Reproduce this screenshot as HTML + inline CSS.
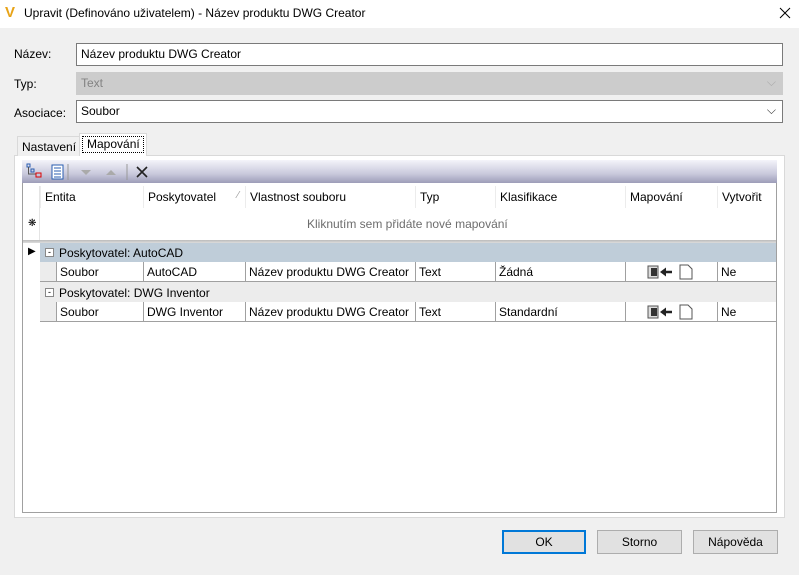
<!DOCTYPE html><html><head><meta charset="utf-8"><style>
*{box-sizing:border-box;margin:0;padding:0}
body{width:799px;height:575px;background:#f0f0f0;font-family:"Liberation Sans","DejaVu Sans",sans-serif;font-size:12px;color:#000;position:relative;overflow:hidden}
.a{position:absolute}
.t{white-space:nowrap}
.inp{position:absolute;left:76px;width:707px;height:23px;border:1px solid #7a7a7a;background:#fff;padding:3px 4px}
.hdr{position:absolute;top:186px;height:22px;padding:4px 4px;color:#000;border-left:1px solid #ececec}
.cell{position:absolute;height:20px;padding:3px 3px;border-left:1px solid #a0a0a0;border-bottom:1px solid #a0a0a0;background:#fff;white-space:nowrap}
.btn{position:absolute;top:530px;height:24px;border:1px solid #adadad;background:#e1e1e1;text-align:center;padding-top:4px}
</style></head><body>
<div class="a" style="left:0;top:0;width:799px;height:28px;background:#fff"></div>
<div class="a t" style="left:5px;top:5px;width:14px;height:16px;color:#e8a317;font-weight:bold;font-size:15px;line-height:16px">V</div>
<div class="a t" style="left:24px;top:6px;font-size:12px">Upravit (Definováno uživatelem) - Název produktu DWG Creator</div>
<svg class="a" style="left:779px;top:7px" width="12" height="12"><path d="M1 1l10 10M11 1L1 11" stroke="#000" stroke-width="1"/></svg>

<div class="a t" style="left:14px;top:47px">Název:</div>
<div class="inp" style="top:43px">Název produktu DWG Creator</div>
<div class="a t" style="left:14px;top:77px">Typ:</div>
<div class="inp" style="top:72px;background:#cccccc;border-color:#cccccc;color:#838383">Text<span style="position:absolute;right:6px;top:2px;color:#aaa">⌵</span></div>
<div class="a t" style="left:14px;top:106px">Asociace:</div>
<div class="inp" style="top:100px">Soubor<span style="position:absolute;right:6px;top:2px;color:#333">⌵</span></div>

<div class="a" style="left:14px;top:155px;width:771px;height:363px;border:1px solid #d9d9d9;background:#fff"></div>
<div class="a t" style="left:17px;top:136px;width:63px;height:20px;border:1px solid #d9d9d9;border-bottom:none;background:#f0f0f0;padding:3px 4px">Nastavení</div>
<div class="a t" style="left:79px;top:133px;width:68px;height:23px;border:1px solid #d9d9d9;border-bottom:none;background:#fff;padding:2px 2px"><span style="border:1px dotted #000;padding:0 3px 0 4px;display:inline-block;height:17px;width:62px">Mapování</span></div>

<div class="a" style="left:22px;top:160px;width:755px;height:23px;background:linear-gradient(#f4f4fa,#c9c9dc 60%,#9d9db8)"></div>
<svg class="a" style="left:26px;top:163px" width="130" height="18">
<rect x="1" y="1" width="3" height="3" fill="none" stroke="#2a5db0"/><rect x="5" y="6" width="3" height="3" fill="none" stroke="#2a5db0"/><rect x="10" y="10" width="5" height="4" fill="none" stroke="#d00"/><path d="M2.5 4v7h7" stroke="#555" fill="none"/>
<rect x="26" y="2" width="11" height="14" fill="#fff" stroke="#2a5db0"/><path d="M28 5h7M28 8h7M28 11h7M28 14h7" stroke="#2a5db0"/>
<path d="M42 1v16" stroke="#999"/>
<path d="M55 7l5 5 5-5z" fill="#aaa"/><path d="M80 12l5-5 5 5z" fill="#aaa"/>
<path d="M101 1v16" stroke="#999"/>
<path d="M111 4l10 10M121 4l-10 10" stroke="#222" stroke-width="1.6"/>
</svg>

<div class="a" style="left:22px;top:183px;width:755px;height:330px;border:1px solid #a0a0a0;border-top:none;background:#fff"></div>
<div class="hdr t" style="left:40px">Entita</div>
<div class="hdr t" style="left:143px;width:102px">Poskytovatel<span style="position:absolute;right:6px;color:#999;font-size:10px">⁄</span></div>
<div class="hdr t" style="left:245px">Vlastnost souboru</div>
<div class="hdr t" style="left:415px">Typ</div>
<div class="hdr t" style="left:495px">Klasifikace</div>
<div class="hdr t" style="left:625px">Mapování</div>
<div class="hdr t" style="left:717px">Vytvořit</div>
<div class="a" style="left:39px;top:186px;width:1px;height:55px;background:#e4e4e4"></div>
<div class="a t" style="left:28px;top:218px;font-size:10px">❋</div>
<div class="a t" style="left:307px;top:217px;color:#6d6d6d">Kliknutím sem přidáte nové mapování</div>
<div class="a" style="left:23px;top:240px;width:753px;height:3px;background:linear-gradient(#bbb,#ddd)"></div>

<div class="a t" style="left:28px;top:246px;font-size:10px">▶</div>
<div class="a" style="left:40px;top:243px;width:736px;height:19px;background:#bfcdd9"></div>
<div class="a" style="left:45px;top:248px;width:9px;height:9px;border:1px solid #888;background:#fff;font-size:9px;line-height:6px;text-align:center">-</div>
<div class="a t" style="left:59px;top:246px">Poskytovatel: AutoCAD</div>
<div class="a" style="left:40px;top:262px;width:16px;height:20px;background:#ececec;border-bottom:1px solid #a0a0a0"></div>
<div class="cell" style="left:56px;top:262px;width:87px">Soubor</div>
<div class="cell" style="left:143px;top:262px;width:102px">AutoCAD</div>
<div class="cell" style="left:245px;top:262px;width:170px">Název produktu DWG Creator</div>
<div class="cell" style="left:415px;top:262px;width:80px">Text</div>
<div class="cell" style="left:495px;top:262px;width:130px">Žádná</div>
<div class="cell" style="left:625px;top:262px;width:92px"></div>
<div class="cell" style="left:717px;top:262px;width:59px">Ne</div>

<div class="a" style="left:40px;top:282px;width:736px;height:20px;background:#ececec"></div>
<div class="a" style="left:45px;top:288px;width:9px;height:9px;border:1px solid #888;background:#fff;font-size:9px;line-height:6px;text-align:center">-</div>
<div class="a t" style="left:59px;top:286px">Poskytovatel: DWG Inventor</div>
<div class="a" style="left:40px;top:302px;width:16px;height:20px;background:#ececec;border-bottom:1px solid #a0a0a0"></div>
<div class="cell" style="left:56px;top:302px;width:87px">Soubor</div>
<div class="cell" style="left:143px;top:302px;width:102px">DWG Inventor</div>
<div class="cell" style="left:245px;top:302px;width:170px">Název produktu DWG Creator</div>
<div class="cell" style="left:415px;top:302px;width:80px">Text</div>
<div class="cell" style="left:495px;top:302px;width:130px">Standardní</div>
<div class="cell" style="left:625px;top:302px;width:92px"></div>
<div class="cell" style="left:717px;top:302px;width:59px">Ne</div>

<svg class="a" style="left:647px;top:264px" width="48" height="16"><rect x="1" y="2" width="10" height="12" fill="#ddd" stroke="#555"/><rect x="4" y="4" width="6" height="8" fill="#333"/><path d="M16 8h9" stroke="#222" stroke-width="2.5"/><path d="M13 8l6-4.5v9z" fill="#222"/><path d="M33 1h8l4 4v10h-12z" fill="#fff" stroke="#555"/></svg>
<svg class="a" style="left:647px;top:304px" width="48" height="16"><rect x="1" y="2" width="10" height="12" fill="#ddd" stroke="#555"/><rect x="4" y="4" width="6" height="8" fill="#333"/><path d="M16 8h9" stroke="#222" stroke-width="2.5"/><path d="M13 8l6-4.5v9z" fill="#222"/><path d="M33 1h8l4 4v10h-12z" fill="#fff" stroke="#555"/></svg>

<div class="btn" style="left:502px;width:84px;border:2px solid #0078d7;padding-top:3px">OK</div>
<div class="btn" style="left:597px;width:85px">Storno</div>
<div class="btn" style="left:693px;width:85px">Nápověda</div>
</body></html>
